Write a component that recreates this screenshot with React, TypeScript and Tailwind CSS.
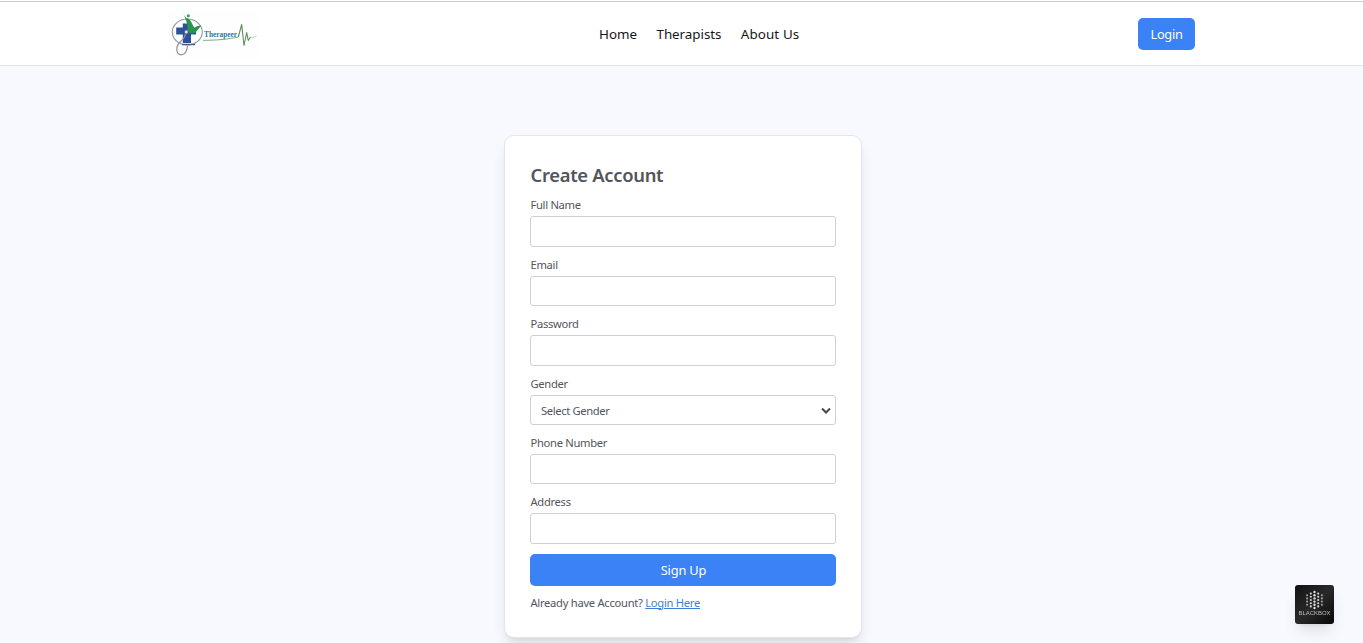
import type { ReactNode } from "react";

function Logo() {
  return (
    <svg width="90" height="46" viewBox="0 0 90 46" className="block" aria-label="Therapeer">
      <rect x="0" y="0" width="90" height="46" fill="#fefefe" />
      <ellipse cx="18.3" cy="20" rx="15" ry="13" fill="none" stroke="#8f989f" strokeWidth="1.1" />
      <path d="M13.800 11.500H22v4h5v7h-5V31h-8.200v-8.500H7.200v-7h6.600z" fill="#2b509c" />
      <path d="M14.500 2.500c1.500 2 2.500 3.500 4 4 1.500.500 3 1.500 4 4l3 6c2-2.500 4-3 6.500-2.500-2 2-4 5-6 7-3 1-6 0-8-2 1-4 .500-9-3.500-16.500z" fill="#27934c" />
      <circle cx="19.300" cy="3.800" r="1.600" fill="#38a65b" />
      <circle cx="17.300" cy="20" r="1.900" fill="#e6ebf2" stroke="#4a638c" strokeWidth="0.900" />
      <path d="M16.300 22c0 6-7 7-8.300 13-1 5 1 7.800 4 7.800 4 0 6-3 6.500-9" fill="none" stroke="#8c9499" strokeWidth="1.200" />
      <path d="M13 32.500h13" stroke="#47657c" strokeWidth="1.500" />
      <text x="35" y="24.500" fontFamily="Liberation Serif, serif" fontSize="9" fontWeight="700" fill="#237ca8" textLength="33" lengthAdjust="spacingAndGlyphs">Therapeer</text>
      <path d="M34 28.300c14 0 25-1 35.300-3.300" fill="none" stroke="#75ad87" strokeWidth="1" />
      <path d="M69.300 25l3.400-12.500L75 33.500l2.700-13 1.500 8 2.300-3.500" fill="none" stroke="#5d8f5c" strokeWidth="1.100" strokeLinejoin="round" />
      <path d="M81.500 25l2 .500 4-1.500" fill="none" stroke="#b5cdb5" strokeWidth="0.800" />
    </svg>
  );
}

function Field({ label, children }: { label: string; children: ReactNode }) {
  return (
    <label className="flex h-[59.4px] flex-col text-[11.2px] leading-4 tracking-[-0.3px]">
      <span className="mb-[3px] pl-[0.5px]">{label}</span>
      {children}
    </label>
  );
}

const control = "h-[30.4px] w-full rounded-[3px] border border-[#d0d1d3] bg-white px-2.5 outline-none";

function TextField({ label, type = "text" }: { label: string; type?: string }) {
  return (
    <Field label={label}>
      <input type={type} className={control} />
    </Field>
  );
}

function BlackboxButton() {
  const columns = [4, 5, 6, 5, 4];
  return (
    <button className="fixed right-[29px] bottom-[19px] h-[39px] w-[39px] overflow-hidden rounded-[3px] bg-linear-to-br from-[#111111] via-[#292929] to-[#080808] shadow-lg">
      <svg width="39" height="39" viewBox="0 0 39 39">
        {columns.map((count, c) =>
          Array.from({ length: count }, (_, r) => (
            <circle
              key={`${c}-${r}`}
              cx={19.5 + (c - 2) * 3.7}
              cy={15 + (r - (count - 1) / 2) * 3.2}
              r={c === 2 ? 1.2 : 1.05}
              fill={c === 0 || c === 4 ? "#a0a0a0" : "#dedede"}
            />
          ))
        )}
        <text x="3.500" y="30.300" fontFamily="Liberation Sans, sans-serif" fontSize="5.800" fill="#bcbcbc" textLength="32" lengthAdjust="spacingAndGlyphs">BLACKBOX</text>
      </svg>
    </button>
  );
}

export default function App() {
  return (
    <div className="flex h-[643px] flex-col overflow-hidden bg-[#f8f9fe] font-['Noto_Sans',sans-serif] text-[#52555c]">
      <div className="h-px shrink-0 bg-white" />
      <header className="h-[65px] shrink-0 border-t border-b border-t-[#c9cacb] border-b-[#e4e6eb] bg-white">
        <div className="mx-auto flex h-[63px] w-[1027px] items-center">
          <div className="flex w-[200px] pt-0.5 pl-px"><Logo /></div>
          <nav className="flex flex-1 gap-[19.4px] pt-0.5 pl-[231px] text-[13.4px] text-[#171717]">
            <a>Home</a>
            <a className="tracking-[-0.05px]">Therapists</a>
            <a className="tracking-[0.1px]">About Us</a>
          </nav>
          <div className="flex w-[200px] justify-end">
            <button className="h-8 w-[57px] rounded-[5px] bg-[#3b82f6] pt-0.5 text-[12.8px] tracking-[-0.3px] text-white">Login</button>
          </div>
        </div>
      </header>
      <main className="flex justify-center pt-[69px] pl-[3px]">
        <form className="h-[503px] w-[358px] shrink-0 rounded-[10px] border border-[#e4e6ea] bg-white px-[25px] pt-[25px] shadow-lg">
          <h1 className="mb-[8.4px] h-7 pl-[0.5px] text-[18.4px] leading-7 font-semibold tracking-[-0.3px]">Create Account</h1>
          <TextField label="Full Name" />
          <TextField label="Email" />
          <TextField label="Password" type="password" />
          <Field label="Gender">
            <div className="relative">
              <select className={`${control} appearance-none pt-0.5 tracking-[-0.35px]`}>
                <option>Select Gender</option>
              </select>
              <svg className="pointer-events-none absolute top-[12px] right-[4px]" width="12" height="8" viewBox="0 0 12 8" fill="none" stroke="#44474c" strokeWidth="2">
                <path d="M2 1.500 6 5.500 10 1.500" />
              </svg>
            </div>
          </Field>
          <TextField label="Phone Number" />
          <TextField label="Address" />
          <button type="button" className="block h-8 w-full rounded-[5px] bg-[#3b82f6] pt-px pl-px text-[12.8px] tracking-[-0.15px] text-white">Sign Up</button>
          <p className="mt-[9px] pl-[0.5px] text-[11.2px] leading-4 tracking-[-0.28px]">
            Already have Account? <a className="text-[#3d7fd8] underline">Login Here</a>
          </p>
        </form>
      </main>
      <BlackboxButton />
    </div>
  );
}
